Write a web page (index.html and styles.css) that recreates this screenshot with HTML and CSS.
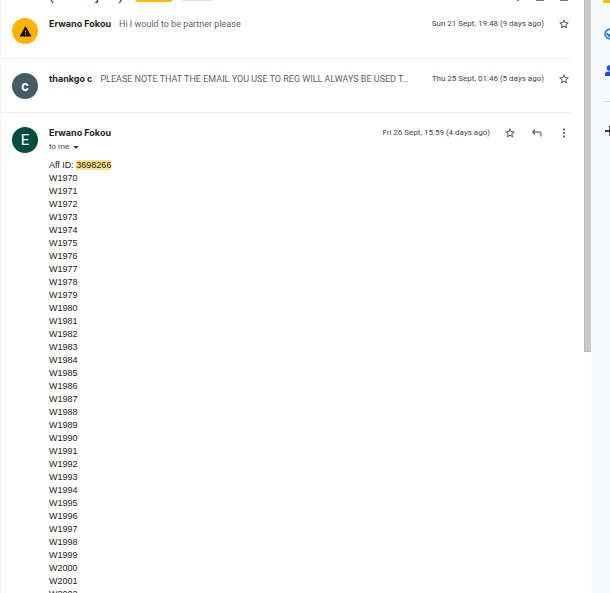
FILE: index.html
```html
<!DOCTYPE html>
<html lang="en">
<head>
<meta charset="utf-8">
<title>(no subject)</title>
<link rel="stylesheet" href="styles.css">
</head>
<body>
<svg class="defs" aria-hidden="true">
  <symbol id="star" viewBox="0 0 24 24"><path d="M22 9.24l-7.19-.62L12 2 9.19 8.63 2 9.24l5.46 4.73L5.82 21 12 17.27 18.18 21l-1.63-7.03L22 9.24zM12 15.4l-3.76 2.27 1-4.28-3.32-2.88 4.38-.38L12 6.1l1.71 4.04 4.38.38-3.32 2.88 1 4.28L12 15.4z"/></symbol>
</svg>
<main class="thread">
  <header class="subject">
    <h1>(no subject)</h1>
    <span class="chip chip-label"></span>
    <span class="chip chip-inbox"></span>
    <span class="tools">
      <svg class="tool-expand" viewBox="0 0 4 2"><path d="M1 0h2v1H1z"/></svg>
      <svg class="tool" viewBox="0 0 8 2"><path d="M0 0h8v1H0z"/></svg>
      <svg class="tool" viewBox="0 0 8 2"><path d="M0 0h8v1H0z"/></svg>
    </span>
  </header>

  <article class="message">
    <span class="avatar warn"><svg viewBox="0 0 24 24" role="img" aria-label="Warning"><path d="M1 21h22L12 2zm12-3h-2v-2h2zm0-4h-2v-4h2z"/></svg></span>
    <h2>Erwano Fokou</h2>
    <p class="preview">Hi I would to be partner please</p>
    <time>Sun 21 Sept, 19:48 (9 days ago)</time>
    <button class="icon" aria-label="Star"><svg><use href="#star"/></svg></button>
  </article>

  <article class="message">
    <span class="avatar slate">c</span>
    <h2>thankgo c</h2>
    <p class="preview">PLEASE NOTE THAT THE EMAIL YOU USE TO REG WILL ALWAYS BE USED T…</p>
    <time>Thu 25 Sept, 01:46 (5 days ago)</time>
    <button class="icon" aria-label="Star"><svg><use href="#star"/></svg></button>
  </article>

  <article class="message open">
    <span class="avatar green">E</span>
    <div class="content">
      <div class="meta">
        <h2>Erwano Fokou</h2>
        <time>Fri 26 Sept, 15:59 (4 days ago)</time>
        <div class="actions">
          <button class="icon" aria-label="Star"><svg><use href="#star"/></svg></button>
          <button class="icon" aria-label="Reply"><svg viewBox="0 0 24 24"><path d="M7.4 4.6L8.8 6 5.8 9H16c3 0 5 2 5 5v5h-2v-5c0-2-1-3-3-3H5.8l3 3-1.4 1.4L2 10z"/></svg></button>
          <button class="icon" aria-label="More"><svg viewBox="0 0 24 24"><circle cx="12" cy="5" r="2"/><circle cx="12" cy="12" r="2"/><circle cx="12" cy="19" r="2"/></svg></button>
        </div>
      </div>
      <button class="recipient">to me <svg viewBox="0 0 6 3"><path d="M0 0h6L3 3z"/></svg></button>
      <div class="body">Aff ID: <mark>3698266</mark><br>
W1970<br>W1971<br>W1972<br>W1973<br>W1974<br>W1975<br>W1976<br>W1977<br>W1978<br>W1979<br>
W1980<br>W1981<br>W1982<br>W1983<br>W1984<br>W1985<br>W1986<br>W1987<br>W1988<br>W1989<br>
W1990<br>W1991<br>W1992<br>W1993<br>W1994<br>W1995<br>W1996<br>W1997<br>W1998<br>W1999<br>
W2000<br>W2001<br>W2002</div>
    </div>
  </article>
</main>
<div class="scrollbar"><div class="thumb"></div></div>
<aside class="panel">
  <svg class="keep" viewBox="0 0 14 3"><path d="M0 0h14v2q0 1-1 1H1Q0 3 0 2z" fill="#fbbc04"/></svg>
  <svg class="app" viewBox="0 0 14 14"><circle cx="7" cy="7" r="4.8" fill="none" stroke="#2684fc" stroke-width="2"/><path d="M4 6.5L6.5 9 12 3" fill="none" stroke="#1b66e8" stroke-width="1.8"/></svg>
  <svg class="app contacts" viewBox="0 0 14 14"><circle cx="6.5" cy="4" r="2.8" fill="#1a56db"/><path d="M2 12V10.5q0-3 3-3h4q3 0 3 3V12z" fill="#1f4fd0"/></svg>
  <hr>
  <button class="add" aria-label="Get add-ons"><svg viewBox="0 0 10 10"><path d="M0 5h10M5 0v10" stroke="#000" stroke-width="1.3"/></svg></button>
</aside>
</body>
</html>
```
FILE: styles.css
```css
* { box-sizing: border-box; }

body {
  display: flex;
  height: 100vh;
  margin: 0;
  overflow: hidden;
  background: #fff;
  color: #1f1f1f;
  font: 9px/12px Roboto, "Liberation Sans", sans-serif;
}

h1, h2, p { margin: 0; }
svg { display: block; }
button {
  padding: 0;
  border: 0;
  background: none;
  color: inherit;
  font: inherit;
}

.defs { position: absolute; width: 0; height: 0; }

.thread {
  flex: 1;
  min-width: 0;
  padding-right: 14px;
  border-left: 1px solid #f2f4fb;
}

.subject {
  display: flex;
  align-items: flex-end;
  height: 4px;
  padding-left: 48px;
}
.subject h1 {
  width: 78px;
  font-size: 14px;
  font-weight: 400;
  line-height: 18px;
  white-space: nowrap;
}
.chip { height: 10px; margin-left: 8px; border-radius: 3px; }
.chip-label { width: 38px; margin-bottom: 2px; background: #fbbc04; }
.chip-inbox { width: 32px; margin-bottom: 3px; background: #ddd; }
.tools {
  display: flex;
  gap: 16px;
  margin: 0 2px 2px auto;
  fill: #777;
}
.tool { width: 8px; height: 2px; }
.tool-expand { width: 4px; height: 2px; }

.message {
  display: flex;
  align-items: flex-start;
  height: 54px;
  padding: 14px 0 0 11px;
  border-bottom: 1px solid #e9edf3;
}
.subject + .message { height: 55px; }
.message.open { height: auto; border: 0; }

.avatar {
  display: flex;
  flex: none;
  align-items: center;
  justify-content: center;
  width: 26px;
  height: 26px;
  margin-right: 11px;
  border-radius: 50%;
  color: #fff;
  font-size: 14px;
}
.warn { background: #ffb300; }
.warn svg { width: 13px; height: 13px; fill: #111; }
.slate { background: #455a64; font-weight: 700; }
.green { background: #004d40; font-size: 15px; }

h2 {
  flex: none;
  font: 700 9px/12px Inter, Roboto, sans-serif;
}

.preview {
  flex: 1;
  min-width: 0;
  margin: 0 4px 0 8px;
  overflow: hidden;
  color: #5f6368;
  text-overflow: ellipsis;
  white-space: nowrap;
}

time { flex: none; color: #444; font-size: 8px; }

.icon { width: 12px; height: 12px; margin-left: 14px; }
.icon svg { width: 12px; height: 12px; fill: #444; }

.content { flex: 1; min-width: 0; }
.meta { display: flex; }
.meta time { margin-left: auto; }
.actions { display: flex; }
.actions .icon + .icon { margin-left: 15px; }

.recipient {
  display: flex;
  align-items: center;
  gap: 4px;
  margin-top: 2px;
  color: #444;
  font-size: 8px;
}
.recipient svg { width: 6px; height: 3px; fill: #444; }

.body {
  margin-top: 6px;
  color: #222;
  font: 9px/13px "Liberation Sans", Arial, sans-serif;
}
mark { background: #fce08a; color: inherit; }

.scrollbar { flex: none; width: 7px; }
.thumb {
  height: 352px;
  border: 1px solid #bcbcbc;
  border-width: 0 0 1px 1px;
  background: #c9c9c9;
}

.panel {
  flex: none;
  width: 19px;
  padding-left: 12px;
  overflow: hidden;
  background: #f8faff;
}
.panel svg { max-width: none; }
.keep { width: 14px; height: 3px; }
.app { width: 14px; height: 14px; margin-top: 24px; }
.contacts { margin-top: 23px; }
.panel hr {
  width: 14px;
  margin: 23px 0 0;
  border: 0;
  border-top: 1px solid #d8dbe0;
}
.add { width: 12px; margin-top: 24px; padding-left: 2px; }
.add svg { width: 10px; height: 10px; }
```
